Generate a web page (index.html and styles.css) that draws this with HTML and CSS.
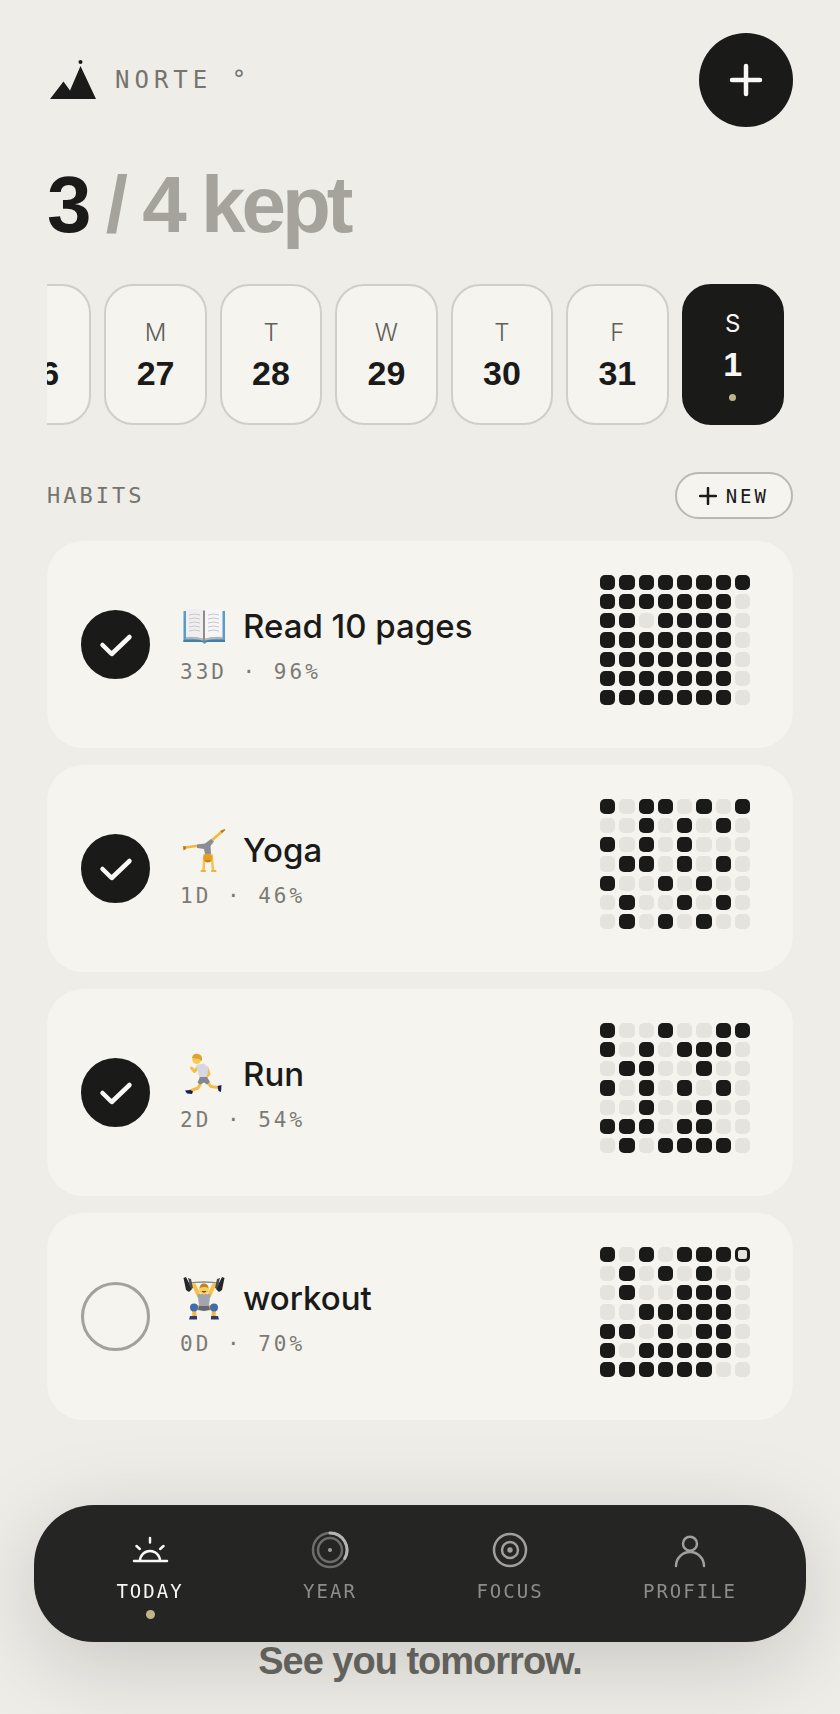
FILE: index.html
```html
<!DOCTYPE html>
<html lang="en">
<head>
  <meta charset="UTF-8">
  <meta name="viewport" content="width=device-width, initial-scale=1.0">
  <title>Norte - Today</title>
  <link rel="stylesheet" href="styles.css">
</head>
<body>
  <main class="page">
    <header class="topbar">
      <div class="brand">
        <svg class="logo" viewBox="0 0 52 52" aria-hidden="true">
          <path d="M3 45 16.5 27.5 23 36.5 33.5 12 49 45Z"/>
          <circle cx="33.5" cy="8" r="2"/>
        </svg>
        <span class="brand-name">NORTE °</span>
      </div>
      <button class="add" aria-label="Add">
        <svg viewBox="0 0 36 36"><path d="M18 4v28M4 18h28"/></svg>
      </button>
    </header>

    <h1>3 <span>/ 4 kept</span></h1>

    <div class="days">
      <button class="day"><span class="dow">S</span><span class="num">26</span></button>
      <button class="day"><span class="dow">M</span><span class="num">27</span></button>
      <button class="day"><span class="dow">T</span><span class="num">28</span></button>
      <button class="day"><span class="dow">W</span><span class="num">29</span></button>
      <button class="day"><span class="dow">T</span><span class="num">30</span></button>
      <button class="day"><span class="dow">F</span><span class="num">31</span></button>
      <button class="day active"><span class="dow">S</span><span class="num">1</span><i class="day-dot"></i></button>
    </div>

    <div class="section-head">
      <h2>HABITS</h2>
      <button class="new">
        <svg viewBox="0 0 18 18"><path d="M9 1v16M1 9h16"/></svg>
        NEW
      </button>
    </div>

    <section class="habits">
      <article class="habit">
        <label class="check">
          <input type="checkbox" checked aria-label="Read 10 pages">
          <svg viewBox="0 0 69 69"><path d="M21.5 35 30.7 44 48.5 27"/></svg>
        </label>
        <div class="info">
          <div class="title">
            <svg class="emoji" viewBox="0 0 48 48" aria-hidden="true">
              <path d="M3.5 9h41.5v31h-18l-2.5 2-2.5-2h-18.5z" fill="#5b9cc4"/>
              <path d="M3.5 38h41.5v2h-41.5z" fill="#3f7fa8"/>
              <path d="M6 8q10-3 18 .5v28.5q-9-3-18-1z" fill="#f0eff0"/>
              <path d="M42.5 8q-10-3-18.5 .5v28.5q9-3 18.5-1z" fill="#f6f5f7"/>
              <path d="M6 35q9-1 18 2 9-3 18.500-2v2q-10-1-18.500 2-8-3-18-2z" fill="#b9b6b3"/>
              <path d="M23 8.500h2v30l-1 1.500-1-1.500z" fill="#8f8c8a"/>
              <path d="M9 13q6-2 11 0M9 17q6-2 11 0M9 21q6-2 11 0M9 25q6-2 11 0M9 29q6-2 11 0M28 13q6-2 11 0M28 17q6-2 11 0M28 21q6-2 11 0M28 25q6-2 11 0M28 29q6-2 11 0" fill="none" stroke="#c9c7cb"/>
            </svg>
            <h3>Read 10 pages</h3>
          </div>
          <p class="meta">33D · 96%</p>
        </div>
        <div class="heat" data-days="11111111 11111110 11011110 11111110 11111110 11111110 11111110"></div>
      </article>

      <article class="habit">
        <label class="check">
          <input type="checkbox" checked aria-label="Yoga">
          <svg viewBox="0 0 69 69"><path d="M21.5 35 30.7 44 48.5 27"/></svg>
        </label>
        <div class="info">
          <div class="title">
            <svg class="emoji" viewBox="0 0 48 48" aria-hidden="true">
              <path d="M20 19.5 5 21.5" fill="none" stroke="#f3b83c" stroke-width="2.5" stroke-linecap="round"/>
              <path d="M31 15 42 5.5" fill="none" stroke="#f3b83c" stroke-width="2.5" stroke-linecap="round"/>
              <path d="M3 20l3 .5v2.5l-2.500 1.500zM40 5l4.500-2 1 1-3.500 3z" fill="#b8791f"/>
              <path d="M17 18.500 25 17.500 31 13 34 15.500 30.500 20 31 28H25L24 23 17 22Z" fill="#8b8c94"/>
              <path d="M24.500 28 23.500 44M31.500 28 33 44" fill="none" stroke="#f6c34f" stroke-width="2.500"/>
              <path d="M21.500 45h3.500M32 45h3.500" stroke="#eeb040" stroke-width="2" stroke-linecap="round"/>
              <circle cx="27.8" cy="32" r="4.5" fill="#e59d27"/>
              <path d="M24 34q4 4.500 7.500 0z" fill="#c98413"/>
            </svg>
            <h3>Yoga</h3>
          </div>
          <p class="meta">1D · 46%</p>
        </div>
        <div class="heat" data-days="10110101 00101010 10101000 01101010 10010100 01001010 01010100"></div>
      </article>

      <article class="habit">
        <label class="check">
          <input type="checkbox" checked aria-label="Run">
          <svg viewBox="0 0 69 69"><path d="M21.5 35 30.7 44 48.5 27"/></svg>
        </label>
        <div class="info">
          <div class="title">
            <svg class="emoji" viewBox="0 0 48 48" aria-hidden="true">
              <path d="M22 31 18 38 10 41M26 31 31 36.5 38 37.5" fill="none" stroke="#f5bd48" stroke-width="3" stroke-linecap="round" stroke-linejoin="round"/>
              <path d="M18 17 14.5 21.5 11.5 18M27 18 29 24 25.5 27.5" fill="none" stroke="#f5bd48" stroke-width="3" stroke-linecap="round" stroke-linejoin="round"/>
              <path d="M16 15 24 13.5 28.5 18 26.5 28H19.5Z" fill="#d5d7e2"/>
              <path d="M20 27h7l3 5-3 2.5-3-2-4 2-2.5-2z" fill="#85868f"/>
              <circle cx="16.7" cy="9.5" r="4.5" fill="#f8c955"/>
              <path d="M12 8q1-5 6-4 5 1 4 7l-3-2z" fill="#dda42c"/>
              <path d="M5 40.5l5.5-.5 2.5 1.5-1 2.5-5-.5zM37.5 36l4-1-.5 7-2.5-1z" fill="#191f55"/>
            </svg>
            <h3>Run</h3>
          </div>
          <p class="meta">2D · 54%</p>
        </div>
        <div class="heat" data-days="10010011 10101110 01100100 10101010 00100100 11101100 01011110"></div>
      </article>

      <article class="habit">
        <label class="check">
          <input type="checkbox" aria-label="workout">
          <svg viewBox="0 0 69 69"><path d="M21.5 35 30.7 44 48.5 27"/></svg>
        </label>
        <div class="info">
          <div class="title">
            <svg class="emoji" viewBox="0 0 48 48" aria-hidden="true">
              <path d="M7 9.5Q24 6.5 41 9.5" fill="none" stroke="#85878c" stroke-width="1.5"/>
              <path d="M14 11 19 22M34 11 29 22" fill="none" stroke="#f6bf45" stroke-width="4" stroke-linecap="round"/>
              <path d="M3.5 4 6 3 12 15 9 18 6 16ZM44.5 4 42 3 36 15 39 18 42 16Z" fill="#25262a"/>
              <path d="M8 4 11 5 13 14 11 15ZM40 4 37 5 35 14 37 15Z" fill="#484a50"/>
              <path d="M17.5 20h13l-2 15h-9z" fill="#a2a5ad"/>
              <path d="M19.5 33 14 34.5 14.5 43M28.5 33 34 34.5 33.5 43" fill="none" stroke="#f2b63c" stroke-width="4"/>
              <path d="M19 32h10l1 4-6 1-6-1z" fill="#656873"/>
              <circle cx="14" cy="33.5" r="4" fill="#3f6cae"/>
              <circle cx="34" cy="33.5" r="4" fill="#3f6cae"/>
              <path d="M10 42h7v3.5H9zM31 42h7l1 3.5h-8z" fill="#303b6c"/>
              <circle cx="24" cy="15.5" r="5" fill="#f9ce5a"/>
              <path d="M19.5 14q1-5 4.5-4.500 4 0 4.500 4.500-4-2-9 0z" fill="#bd851c"/>
              <path d="M21.5 17h5q-2.5 3-5 0z" fill="#7d3b1b"/>
            </svg>
            <h3>workout</h3>
          </div>
          <p class="meta">0D · 70%</p>
        </div>
        <div class="heat" data-days="10101112 01010100 01001110 00111110 11010110 10111110 11111100"></div>
      </article>
    </section>

    <p class="closing">See you tomorrow.</p>
  </main>

  <nav class="tabs">
    <a class="tab active" href="#today">
      <svg viewBox="0 0 44 44"><path d="M6 33h33M12 33a10 10 0 0 1 20 0M22 10v4.5M8.500 18l3.300 3M35.500 18l-3.300 3"/></svg>
      <span>TODAY</span>
      <i></i>
    </a>
    <a class="tab" href="#year">
      <svg viewBox="0 0 44 44">
        <circle class="dim" cx="22" cy="22" r="17"/>
        <circle class="dim" cx="22" cy="22" r="12"/>
        <path class="arc" d="M22 5a17 17 0 0 1 14.7 25.5"/>
        <circle class="fill" cx="22" cy="22" r="2"/>
      </svg>
      <span>YEAR</span>
      <i></i>
    </a>
    <a class="tab" href="#focus">
      <svg viewBox="0 0 44 44">
        <circle cx="22" cy="22" r="16"/>
        <circle cx="22" cy="22" r="8"/>
        <circle class="fill" cx="22" cy="22" r="2.7"/>
      </svg>
      <span>FOCUS</span>
      <i></i>
    </a>
    <a class="tab" href="#profile">
      <svg viewBox="0 0 44 44">
        <circle cx="22" cy="15.7" r="7"/>
        <path d="M8 38a14 14 0 0 1 28 0"/>
      </svg>
      <span>PROFILE</span>
      <i></i>
    </a>
  </nav>

  <script>
    // 0 = missed, 1 = done, 2 = today, still open
    const states = ['', 'done', 'today'];
    document.querySelectorAll('.heat').forEach(function (heat) {
      heat.dataset.days.replace(/ /g, '').split('').forEach(function (day) {
        const cell = document.createElement('i');
        cell.className = states[day];
        heat.appendChild(cell);
      });
    });
  </script>
</body>
</html>
```
FILE: styles.css
```css
* {
  box-sizing: border-box;
}
body {
  margin: 0;
  background-color: #eeede8;
  color: #1a1a18;
  font-family: Inter, "Liberation Sans", sans-serif;
}
h1, h2, h3, p {
  margin: 0;
}
button {
  font-family: inherit;
  color: inherit;
  padding: 0;
  cursor: pointer;
}
svg {
  display: block;
}
.page {
  padding: 33px 47px 28px;
}

/* header */
.topbar, .section-head {
  display: flex;
  align-items: center;
  justify-content: space-between;
}
.brand {
  display: flex;
  align-items: center;
  gap: 16px;
}
.logo {
  width: 52px;
  height: 52px;
  fill: #1a1a18;
}
.brand-name {
  font-family: "DejaVu Sans Mono", monospace;
  font-size: 24px;
  letter-spacing: 5px;
  color: #75746e;
}
.add {
  display: flex;
  align-items: center;
  justify-content: center;
  width: 94px;
  height: 94px;
  border: none;
  border-radius: 50%;
  background-color: #1a1a18;
}
.add svg {
  width: 36px;
  height: 36px;
  stroke: #f9f8f5;
  stroke-width: 4.5;
  stroke-linecap: round;
}
h1 {
  margin: 38px 0 39px;
  font: bold 80px/80px "Liberation Sans", sans-serif;
  letter-spacing: -4px;
}
h1 span {
  color: #a5a39c;
}

/* day strip */
.days {
  display: flex;
  justify-content: flex-end;
  gap: 13px;
  padding-right: 9px;
  overflow: hidden;
}
.day {
  flex: 0 0 13.9%;
  display: flex;
  flex-direction: column;
  align-items: center;
  justify-content: center;
  height: 141px;
  border: 2px solid #cfcec9;
  border-radius: 29px;
  background-color: #f5f4ef;
}
.dow {
  font-size: 24px;
  font-weight: 300;
  line-height: 32px;
  color: #5f5e59;
}
.num {
  margin-top: 4px;
  font: bold 34px/40px "Liberation Sans", sans-serif;
}
.day.active {
  border-color: #1a1a18;
  background-color: #1a1a18;
  color: #f9f8f5;
}
.day.active .dow {
  color: #f9f8f5;
  font-weight: 400;
}
.day-dot {
  width: 7px;
  height: 7px;
  margin-top: 10px;
  border-radius: 50%;
  background-color: #bdb48a;
}

/* habits */
.section-head {
  margin: 47px 0 22px;
}
h2 {
  font: 22px/30px "DejaVu Sans Mono", monospace;
  letter-spacing: 3px;
  color: #75746e;
}
.new {
  display: flex;
  align-items: center;
  gap: 9px;
  height: 47px;
  padding: 0 22px;
  border: 2px solid #bab8b3;
  border-radius: 24px;
  background-color: #f5f4ef;
  font: 19px/24px "DejaVu Sans Mono", monospace;
  letter-spacing: 3px;
}
.new svg {
  width: 18px;
  height: 18px;
  stroke: #1a1a18;
  stroke-width: 2.5;
  stroke-linecap: round;
}
.habits {
  display: grid;
  gap: 17px;
}
.habit {
  display: flex;
  align-items: center;
  gap: 30px;
  min-height: 207px;
  padding: 34px 43px 34px 34px;
  border-radius: 36px;
  background-color: #f5f4ef;
}
.check {
  display: grid;
  flex: none;
}
.check input, .check svg {
  grid-area: 1 / 1;
  width: 69px;
  height: 69px;
  margin: 0;
}
.check input {
  appearance: none;
  border: 3px solid #a3a19b;
  border-radius: 50%;
}
.check input:checked {
  border-color: #1a1a18;
  background-color: #1a1a18;
}
.check svg {
  visibility: hidden;
  pointer-events: none;
  fill: none;
  stroke: #f9f8f5;
  stroke-width: 4.5;
  stroke-linecap: round;
  stroke-linejoin: round;
}
.check input:checked + svg {
  visibility: visible;
}
.info {
  flex: 1;
}
.title {
  display: flex;
  align-items: center;
  gap: 15px;
  height: 46px;
}
.emoji {
  width: 48px;
  height: 48px;
}
h3 {
  font-size: 33px;
  font-weight: 500;
  line-height: 46px;
}
.meta {
  margin-top: 9px;
  font: 21px/28px "DejaVu Sans Mono", monospace;
  letter-spacing: 3px;
  color: #7b7a74;
}
.heat {
  display: grid;
  grid-template-columns: repeat(8, 1fr);
  grid-template-rows: repeat(7, 1fr);
  gap: 4px;
  align-self: flex-start;
  width: 150px;
  height: 130px;
}
.heat i {
  border-radius: 5px;
  background-color: #e5e3dd;
}
.heat .done {
  background-color: #1a1a18;
}
.heat .today {
  border: 3px solid #1a1a18;
}
.closing {
  margin-top: 217px;
  font: bold 38px/48px "Liberation Sans", sans-serif;
  letter-spacing: -1px;
  text-align: center;
  color: #6a6963;
}

/* bottom navigation */
.tabs {
  position: fixed;
  left: 34px;
  right: 34px;
  bottom: 72px;
  display: flex;
  height: 137px;
  padding: 23px 26px 0;
  border-radius: 60px;
  background-color: #252524;
  box-shadow: 0 20px 90px rgba(0, 0, 0, 0.17);
}
.tab {
  flex: 1;
  display: flex;
  flex-direction: column;
  align-items: center;
  gap: 7px;
  color: #8d8d8b;
  font: 19px/24px "DejaVu Sans Mono", monospace;
  letter-spacing: 2px;
  text-decoration: none;
}
.tab svg {
  width: 44px;
  height: 44px;
  fill: none;
  stroke: #a09f9d;
  stroke-width: 2.5;
  stroke-linecap: round;
}
.tab .dim {
  stroke: #6c6c6a;
}
.tab .arc {
  stroke: #b5b5b3;
  stroke-width: 3;
}
.tab .fill {
  fill: #a09f9d;
  stroke: none;
}
.tab.active {
  color: #f9f8f5;
}
.tab.active svg {
  stroke: #f9f8f5;
}
.tab.active i {
  width: 9px;
  height: 9px;
  border-radius: 50%;
  background-color: #c2b688;
}
```
